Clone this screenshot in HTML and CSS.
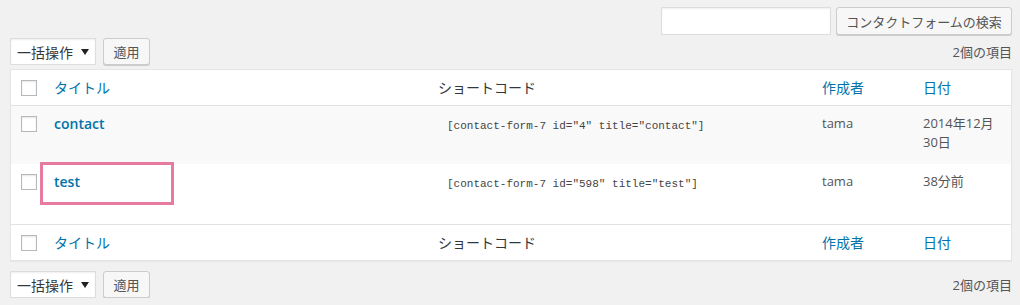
FILE: index.html
```html
<!DOCTYPE html>
<html lang="ja">
<head>
<meta charset="utf-8">
<title>コンタクトフォーム</title>
<link rel="stylesheet" href="styles.css">
</head>
<body>
<div class="page">
  <div class="search-box">
    <div class="search-input"></div>
    <div class="button search-button">コンタクトフォームの検索</div>
  </div>

  <div class="tablenav top">
    <div class="actions">
      <div class="select"><span>一括操作</span><span class="arrow"></span></div>
      <div class="button apply">適用</div>
    </div>
    <div class="count">2個の項目</div>
  </div>

  <table class="list">
    <colgroup>
      <col class="c-cb">
      <col class="c-title">
      <col class="c-code">
      <col class="c-author">
      <col class="c-date">
    </colgroup>
    <thead>
      <tr>
        <th class="cb"><span class="checkbox"></span></th>
        <th class="link">タイトル</th>
        <th>ショートコード</th>
        <th class="link">作成者</th>
        <th class="link">日付</th>
      </tr>
    </thead>
    <tbody>
      <tr class="row-a alt">
        <td class="cb"><span class="checkbox"></span></td>
        <td><span class="row-title">contact</span></td>
        <td><span class="shortcode">[contact-form-7 id="4" title="contact"]</span></td>
        <td class="meta">tama</td>
        <td class="meta">2014年12月30日</td>
      </tr>
      <tr class="row-b">
        <td class="cb"><span class="checkbox"></span></td>
        <td><div class="title-wrap"><span class="row-title">test</span><div class="highlight"></div></div></td>
        <td><span class="shortcode">[contact-form-7 id="598" title="test"]</span></td>
        <td class="meta">tama</td>
        <td class="meta">38分前</td>
      </tr>
    </tbody>
    <tfoot>
      <tr>
        <th class="cb"><span class="checkbox"></span></th>
        <th class="link">タイトル</th>
        <th>ショートコード</th>
        <th class="link">作成者</th>
        <th class="link">日付</th>
      </tr>
    </tfoot>
  </table>

  <div class="tablenav bottom">
    <div class="actions">
      <div class="select"><span>一括操作</span><span class="arrow"></span></div>
      <div class="button apply">適用</div>
    </div>
    <div class="count">2個の項目</div>
  </div>
</div>
</body>
</html>
```

FILE: styles.css
```css
* { box-sizing: border-box; }

html, body {
  margin: 0;
  padding: 0;
  background: #f1f1f1;
}

body {
  font-family: "Open Sans", "Noto Sans CJK JP", sans-serif;
  font-size: 13px;
  color: #444;
}

.page {
  padding: 7px 8px 0 10px;
}

.search-box {
  display: flex;
  justify-content: flex-end;
  gap: 5px;
  height: 28px;
}

.search-input {
  width: 170px;
  height: 28px;
  background: #fff;
  border: 1px solid #ddd;
  box-shadow: inset 0 1px 2px rgba(0,0,0,.07);
}

.button {
  display: flex;
  align-items: center;
  justify-content: center;
  background: #f7f7f7;
  border: 1px solid #ccc;
  border-radius: 3px;
  box-shadow: 0 1px 0 #ccc;
  color: #555;
  font-size: 13px;
  white-space: nowrap;
}

.search-button {
  width: 176px;
  height: 28px;
}

.tablenav {
  display: flex;
  justify-content: space-between;
  align-items: center;
  height: 27px;
}

.tablenav.top { margin-top: 3px; margin-bottom: 4px; }
.tablenav.bottom { margin-top: 10px; }

.actions {
  display: flex;
  gap: 7px;
  height: 27px;
}

.select {
  width: 86px;
  height: 27px;
  display: flex;
  align-items: center;
  padding: 0 5px 0 6px;
  background: #fff;
  border: 1px solid #ddd;
  box-shadow: inset 0 1px 2px rgba(0,0,0,.07);
  color: #32373c;
  font-size: 14px;
}

.arrow {
  margin-left: auto;
  width: 0;
  height: 0;
  border-left: 4px solid transparent;
  border-right: 4px solid transparent;
  border-top: 6px solid #222;
  margin-right: 1px;
}

.apply {
  width: 47px;
  height: 27px;
}

.count {
  color: #555;
  font-size: 13px;
  padding-right: 0;
}

.list {
  width: 1002px;
  table-layout: fixed;
  border-collapse: separate;
  border-spacing: 0;
  background: #fff;
  border: 1px solid #e5e5e5;
  box-shadow: 0 1px 1px rgba(0,0,0,.04);
}

.c-cb { width: 33px; }
.c-title { width: 384px; }
.c-code { width: 384px; }
.c-author { width: 101px; }
.c-date { width: 98px; }

.list th {
  text-align: left;
  font-weight: 400;
  font-size: 14px;
  line-height: 19px;
  padding: 8px 10px;
  color: #32373c;
  vertical-align: middle;
}

.list thead th { border-bottom: 1px solid #e1e1e1; }
.list tfoot th { border-top: 1px solid #e1e1e1; }

.list th.link { color: #0073aa; }

.list th.cb,
.list td.cb {
  padding: 0 0 0 10px;
}

.list th.cb { vertical-align: middle; }
.list td.cb { vertical-align: top; padding-top: 10px; }

.checkbox {
  display: block;
  width: 16px;
  height: 16px;
  background: #fff;
  border: 1px solid #b4b9be;
  box-shadow: inset 0 1px 2px rgba(0,0,0,.1);
}

.list td {
  vertical-align: top;
  padding: 8px 10px;
  line-height: 19px;
}

.row-a { height: 58px; }
.row-b { height: 60px; }

.alt td { background: #f9f9f9; }

.row-title {
  color: #0073aa;
  font-weight: 600;
  font-size: 14px;
  line-height: 19.6px;
}

.shortcode {
  display: inline-block;
  padding: 5px 0 0 9px;
  font-family: "Liberation Mono", "DejaVu Sans Mono", monospace;
  font-size: 11px;
  line-height: 15px;
  color: #444;
  white-space: nowrap;
}

.meta {
  color: #555;
  font-size: 13px;
}

.title-wrap {
  position: relative;
}

.highlight {
  position: absolute;
  left: -14px;
  top: -10px;
  width: 134px;
  height: 43px;
  border: 3px solid #e77a9f;
}
```
